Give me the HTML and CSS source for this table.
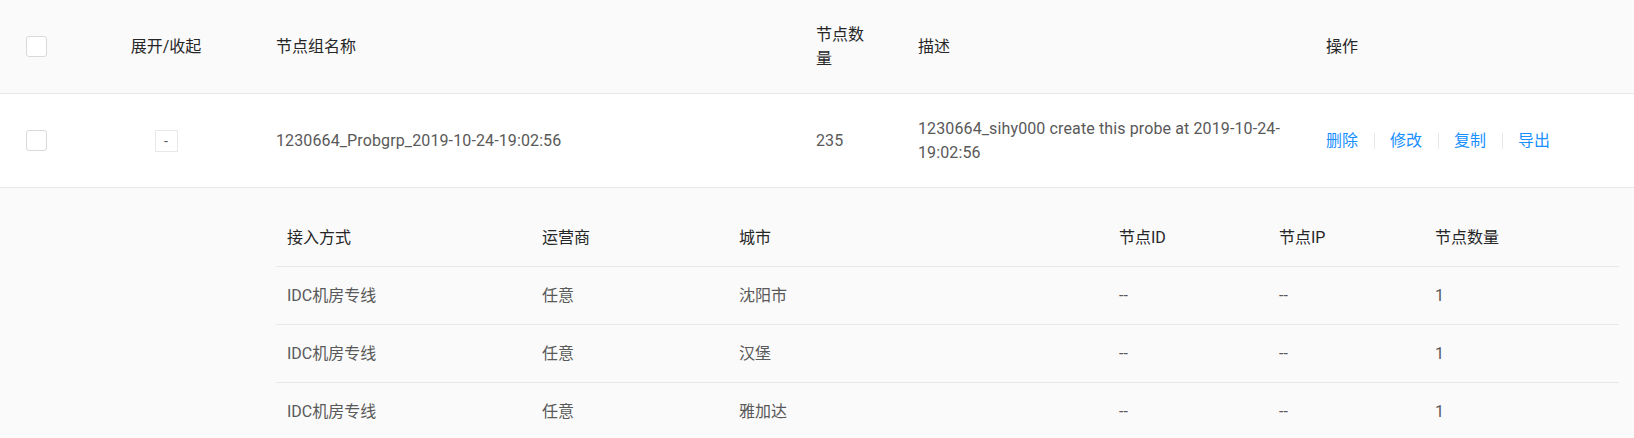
FILE: index.html
```html
<!DOCTYPE html>
<html lang="zh-CN">
<head>
<meta charset="utf-8">
<title>节点组</title>
<link rel="stylesheet" href="styles.css">
</head>
<body>
<div class="table">
  <div class="row head">
    <div class="cell c-check"><span class="checkbox"></span></div>
    <div class="cell c-expand">展开/收起</div>
    <div class="cell">节点组名称</div>
    <div class="cell">节点数量</div>
    <div class="cell">描述</div>
    <div class="cell">操作</div>
  </div>
  <div class="row body">
    <div class="cell c-check"><span class="checkbox"></span></div>
    <div class="cell c-expand"><span class="expand-btn">-</span></div>
    <div class="cell latin">1230664_Probgrp_2019-10-24-19:02:56</div>
    <div class="cell latin">235</div>
    <div class="cell latin">1230664_sihy000 create this probe at 2019-10-24-<wbr>19:02:56</div>
    <div class="cell actions">
      <a class="link">删除</a><span class="divider"></span><a class="link">修改</a><span class="divider"></span><a class="link">复制</a><span class="divider"></span><a class="link">导出</a>
    </div>
  </div>
  <div class="expanded">
    <div class="sub">
      <div class="sub-row sub-head">
        <div class="sub-cell">接入方式</div>
        <div class="sub-cell">运营商</div>
        <div class="sub-cell">城市</div>
        <div class="sub-cell">节点ID</div>
        <div class="sub-cell">节点IP</div>
        <div class="sub-cell">节点数量</div>
      </div>
      <div class="sub-row">
        <div class="sub-cell">IDC机房专线</div>
        <div class="sub-cell">任意</div>
        <div class="sub-cell">沈阳市</div>
        <div class="sub-cell">--</div>
        <div class="sub-cell">--</div>
        <div class="sub-cell">1</div>
      </div>
      <div class="sub-row">
        <div class="sub-cell">IDC机房专线</div>
        <div class="sub-cell">任意</div>
        <div class="sub-cell">汉堡</div>
        <div class="sub-cell">--</div>
        <div class="sub-cell">--</div>
        <div class="sub-cell">1</div>
      </div>
      <div class="sub-row">
        <div class="sub-cell">IDC机房专线</div>
        <div class="sub-cell">任意</div>
        <div class="sub-cell">雅加达</div>
        <div class="sub-cell">--</div>
        <div class="sub-cell">--</div>
        <div class="sub-cell">1</div>
      </div>
    </div>
  </div>
</div>
</body>
</html>
```

FILE: styles.css
```css
html, body {
  margin: 0;
  padding: 0;
  background: #ffffff;
}
body {
  font-family: Roboto, "Noto Sans CJK SC", sans-serif;
  font-size: 16px;
  line-height: 24px;
  color: #595959;
  overflow: hidden;
  height: 438px;
}
.table {
  width: 1634px;
}
.row {
  display: grid;
  grid-template-columns: 76px 180px 540px 102px 408px 1fr;
  align-items: center;
  border-bottom: 1px solid #e8e8e8;
}
.head {
  height: 94px;
  box-sizing: border-box;
  background: #fafafa;
  color: #262626;
}
.body {
  height: 94px;
  box-sizing: border-box;
  background: #ffffff;
}
.cell {
  padding: 0 20px;
}
.latin {
  letter-spacing: 0.12px;
}
.c-check {
  padding: 0 0 0 26px;
  display: flex;
  align-items: center;
}
.c-expand {
  padding: 0;
  display: flex;
  justify-content: center;
  align-items: center;
}
.checkbox {
  display: block;
  width: 21px;
  height: 21px;
  box-sizing: border-box;
  border: 1px solid #d9d9d9;
  border-radius: 3px;
  background: #fff;
}
.expand-btn {
  display: flex;
  align-items: center;
  justify-content: center;
  width: 23px;
  height: 22px;
  box-sizing: border-box;
  border: 1px solid #e8e8e8;
  background: #fff;
  font-size: 14px;
  line-height: 1;
  color: #595959;
}
.actions {
  display: flex;
  align-items: center;
}
.link {
  color: #1890ff;
  cursor: pointer;
}
.divider {
  display: inline-block;
  width: 1px;
  height: 16px;
  background: #e8e8e8;
  margin: 0 15px 0 16px;
}
.expanded {
  background: #fafafa;
  padding: 21px 15px 0 276px;
  height: 230px;
}
.sub-row {
  display: grid;
  grid-template-columns: 255px 197px 380px 160px 156px 1fr;
  align-items: center;
  height: 58px;
  box-sizing: border-box;
  border-bottom: 1px solid #e8e8e8;
}
.sub-head {
  color: #262626;
  height: 58px;
}
.sub-cell {
  padding-left: 11px;
}
```
